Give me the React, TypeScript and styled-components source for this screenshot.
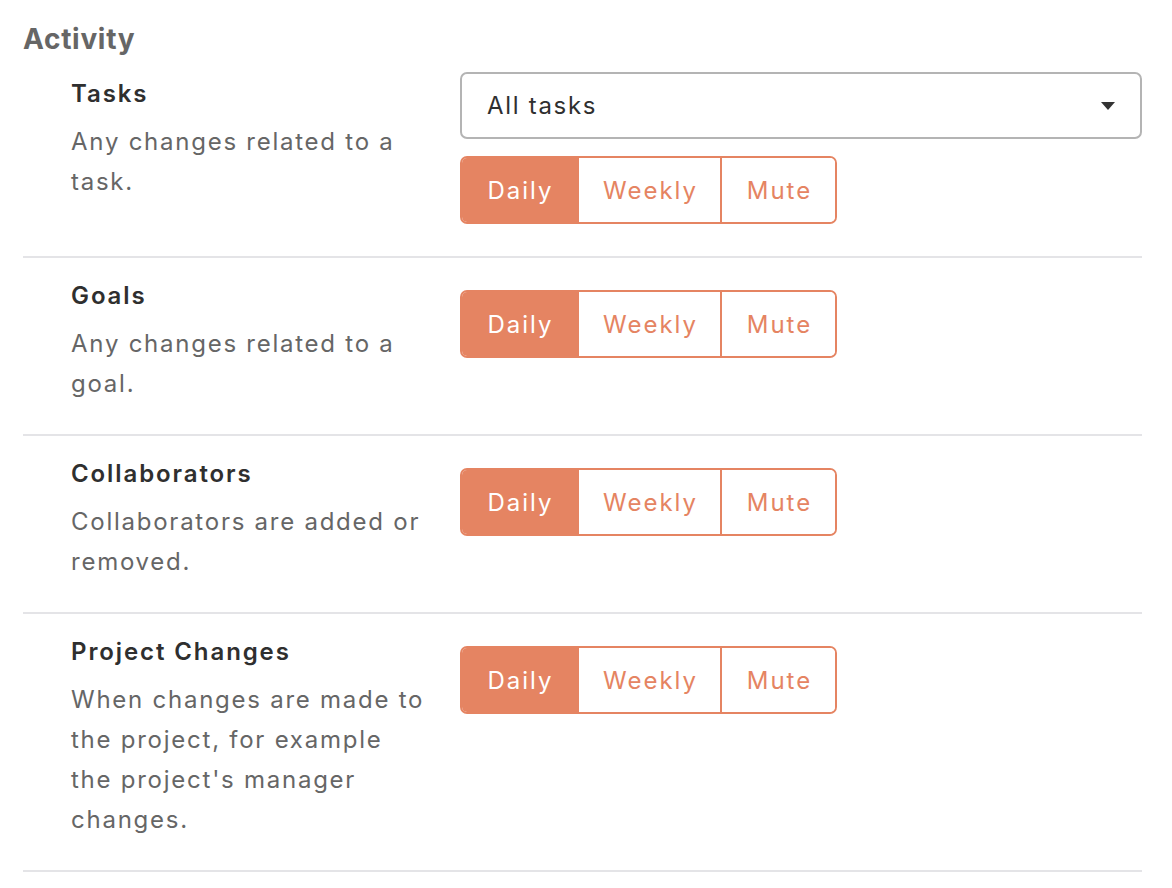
import React from "react";
import styled, { createGlobalStyle } from "styled-components";

const Global = createGlobalStyle`
  html, body { margin: 0; padding: 0; background: #fff; }
  body { font-family: Inter, "Noto Sans", "Liberation Sans", sans-serif; -webkit-font-smoothing: antialiased; }
`;

const ACCENT = "#e58462";

const Page = styled.div`
  padding: 22px 30px 0 23px;
  width: 1119px;
`;

const Heading = styled.h2`
  margin: 0 0 22px;
  font-size: 28px;
  line-height: 34px;
  font-weight: 700;
  letter-spacing: 0.7px;
  color: #666666;
`;

const Section = styled.section<{ $first?: boolean }>`
  display: flex;
  align-items: flex-start;
  gap: 31px;
  padding: ${(p) => (p.$first ? "0" : "22px")} 0 30px 48px;
  border-bottom: 2px solid #e4e4e7;
`;

const Info = styled.div`
  width: 358px;
  flex: none;
`;

const Title = styled.div`
  font-size: 24px;
  line-height: 32px;
  font-weight: 600;
  letter-spacing: 1.9px;
  color: #2f2f2f;
`;

const Desc = styled.div`
  margin-top: 12px;
  font-size: 24px;
  line-height: 40px;
  letter-spacing: 1.75px;
  color: #666666;
`;

const Controls = styled.div<{ $offset: number }>`
  flex: 1;
  display: flex;
  flex-direction: column;
  align-items: flex-start;
  gap: 17px;
  margin-top: ${(p) => p.$offset}px;
  margin-bottom: 2px;
`;

const Select = styled.div`
  box-sizing: border-box;
  width: 100%;
  height: 67px;
  border: 2px solid #b4b4b4;
  border-radius: 7px;
  display: flex;
  align-items: center;
  justify-content: space-between;
  padding: 0 24px 0 25px;
  font-size: 24px;
  letter-spacing: 1.7px;
  color: #2f2f2f;
`;

const Caret = styled.svg`
  width: 16px;
  height: 10px;
`;

const Group = styled.div`
  display: flex;
  height: 68px;
  box-sizing: border-box;
  border: 2px solid ${ACCENT};
  border-radius: 7px;
  overflow: hidden;
`;

const Seg = styled.div<{ $active?: boolean; $w: number }>`
  box-sizing: border-box;
  width: ${(p) => p.$w}px;
  display: flex;
  align-items: center;
  justify-content: center;
  padding-left: 2px;
  font-size: 24px;
  letter-spacing: 2px;
  color: ${(p) => (p.$active ? "#ffffff" : ACCENT)};
  background: ${(p) => (p.$active ? ACCENT : "#ffffff")};
  & + & {
    border-left: 2px solid ${ACCENT};
  }
`;

const Toggle = () => (
  <Group>
    <Seg $active $w={115}>Daily</Seg>
    <Seg $w={143}>Weekly</Seg>
    <Seg $w={115}>Mute</Seg>
  </Group>
);

const rows = [
  { title: "Goals", desc: "Any changes related to a goal." },
  { title: "Collaborators", desc: "Collaborators are added or removed." },
  {
    title: "Project Changes",
    desc: "When changes are made to the project, for example the project's manager changes.",
  },
];

export default function App() {
  return (
    <Page>
      <Global />
      <Heading>Activity</Heading>
      <Section $first>
        <Info>
          <Title>Tasks</Title>
          <Desc>Any changes related to a task.</Desc>
        </Info>
        <Controls $offset={-6}>
          <Select>
            <span>All tasks</span>
            <Caret viewBox="0 0 16 10">
              <path d="M1 1 L15 1 L8 9 Z" fill="#333" />
            </Caret>
          </Select>
          <Toggle />
        </Controls>
      </Section>
      {rows.map((r) => (
        <Section key={r.title}>
          <Info>
            <Title>{r.title}</Title>
            <Desc>{r.desc}</Desc>
          </Info>
          <Controls $offset={10}>
            <Toggle />
          </Controls>
        </Section>
      ))}
    </Page>
  );
}
